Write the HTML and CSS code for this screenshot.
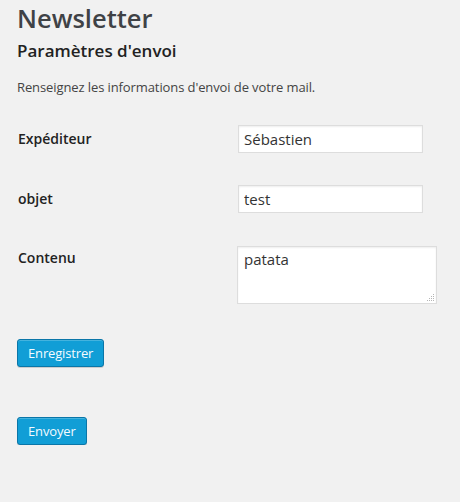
FILE: index.html
```html
<!DOCTYPE html>
<html lang="fr">
<head>
<meta charset="utf-8">
<title>Newsletter</title>
<link rel="stylesheet" href="styles.css">
</head>
<body>
<div class="wrap">
  <h1 class="title">Newsletter</h1>
  <h3 class="subtitle">Paramètres d'envoi</h3>
  <p class="desc">Renseignez les informations d'envoi de votre mail.</p>
  <form class="form">
    <div class="row">
      <label class="label" for="exp">Expéditeur</label>
      <div class="field"><input class="input" id="exp" type="text" value="Sébastien"></div>
    </div>
    <div class="row">
      <label class="label" for="obj">objet</label>
      <div class="field"><input class="input" id="obj" type="text" value="test"></div>
    </div>
    <div class="row row-area">
      <label class="label" for="cont">Contenu</label>
      <div class="field">
        <div class="area-wrap">
          <textarea class="textarea" id="cont">patata</textarea>
          <svg class="grip" width="8" height="8" viewBox="0 0 8 8" aria-hidden="true">
            <rect x="6" y="0" width="1" height="1" fill="#b5b5b5"/>
            <rect x="4" y="2" width="1" height="1" fill="#b5b5b5"/>
            <rect x="6" y="2" width="1" height="1" fill="#b5b5b5"/>
            <rect x="2" y="4" width="1" height="1" fill="#b5b5b5"/>
            <rect x="4" y="4" width="1" height="1" fill="#b5b5b5"/>
            <rect x="6" y="4" width="1" height="1" fill="#b5b5b5"/>
            <rect x="0" y="6" width="1" height="1" fill="#b5b5b5"/>
            <rect x="2" y="6" width="1" height="1" fill="#b5b5b5"/>
            <rect x="4" y="6" width="1" height="1" fill="#b5b5b5"/>
            <rect x="6" y="6" width="1" height="1" fill="#b5b5b5"/>
          </svg>
        </div>
      </div>
    </div>
    <p class="submit"><button type="button" class="button">Enregistrer</button></p>
    <p class="submit second"><button type="button" class="button">Envoyer</button></p>
  </form>
</div>
</body>
</html>
```
FILE: styles.css
```css
html, body {
  margin: 0;
  padding: 0;
  background: #f1f1f1;
}
body {
  font-family: "Open Sans", "DejaVu Sans", sans-serif;
  color: #444;
  font-size: 13px;
}
.wrap {
  padding: 0 0 0 17px;
}
.title {
  margin: 0;
  padding-top: 1px;
  font-size: 25.5px;
  font-weight: 600;
  line-height: 34px;
  color: #3f4246;
}
.subtitle {
  margin: 4px 0 0;
  font-size: 17px;
  font-weight: 600;
  line-height: 24px;
  color: #222;
}
.desc {
  margin: 14px 0 0;
  font-size: 13px;
  letter-spacing: -0.1px;
  line-height: 20px;
  color: #444;
}
.form {
  margin-top: 12px;
}
.row {
  display: flex;
  align-items: flex-start;
}
.label {
  width: 200px;
  padding: 20px 10px 20px 1px;
  font-size: 14px;
  font-weight: 600;
  line-height: 20px;
  color: #222;
}
.field {
  padding: 15px 10px;
}
.row-area .field {
  padding-top: 16px;
}
.row-area .label {
  padding-top: 19px;
}
.input {
  box-sizing: border-box;
  width: 185px;
  height: 28px;
  margin: 1px 0;
  padding: 3px 5px;
  border: 1px solid #ddd;
  box-shadow: inset 0 1px 2px rgba(0,0,0,.07);
  background: #fff;
  font-family: "Open Sans", "DejaVu Sans", sans-serif;
  font-size: 15px;
  color: #333;
  outline: none;
}
.area-wrap {
  position: relative;
  margin: 1px 0 0 -1px;
  width: 200px;
  height: 58px;
}
.textarea {
  box-sizing: border-box;
  display: block;
  width: 200px;
  height: 58px;
  margin: 0;
  padding: 2px 6px;
  border: 1px solid #ddd;
  box-shadow: inset 0 1px 2px rgba(0,0,0,.07);
  background: #fff;
  font-family: "Open Sans", "DejaVu Sans", sans-serif;
  font-size: 15px;
  color: #333;
  outline: none;
  resize: none;
}
.grip {
  position: absolute;
  right: 2px;
  bottom: 2px;
}
.submit {
  margin: 20px 0 0;
}
.submit.second {
  margin-top: 50px;
}
.button {
  height: 28px;
  margin: 0;
  padding: 0 10px 1px;
  border: 1px solid #0a76a8;
  border-radius: 3px;
  background: #119ed6;
  box-shadow: inset 0 1px 0 rgba(120,200,230,.5), 0 1px 0 rgba(0,0,0,.15);
  font-family: "Open Sans", "DejaVu Sans", sans-serif;
  font-size: 13px;
  letter-spacing: -0.15px;
  line-height: 26px;
  color: #f4fbff;
  cursor: pointer;
}
```
